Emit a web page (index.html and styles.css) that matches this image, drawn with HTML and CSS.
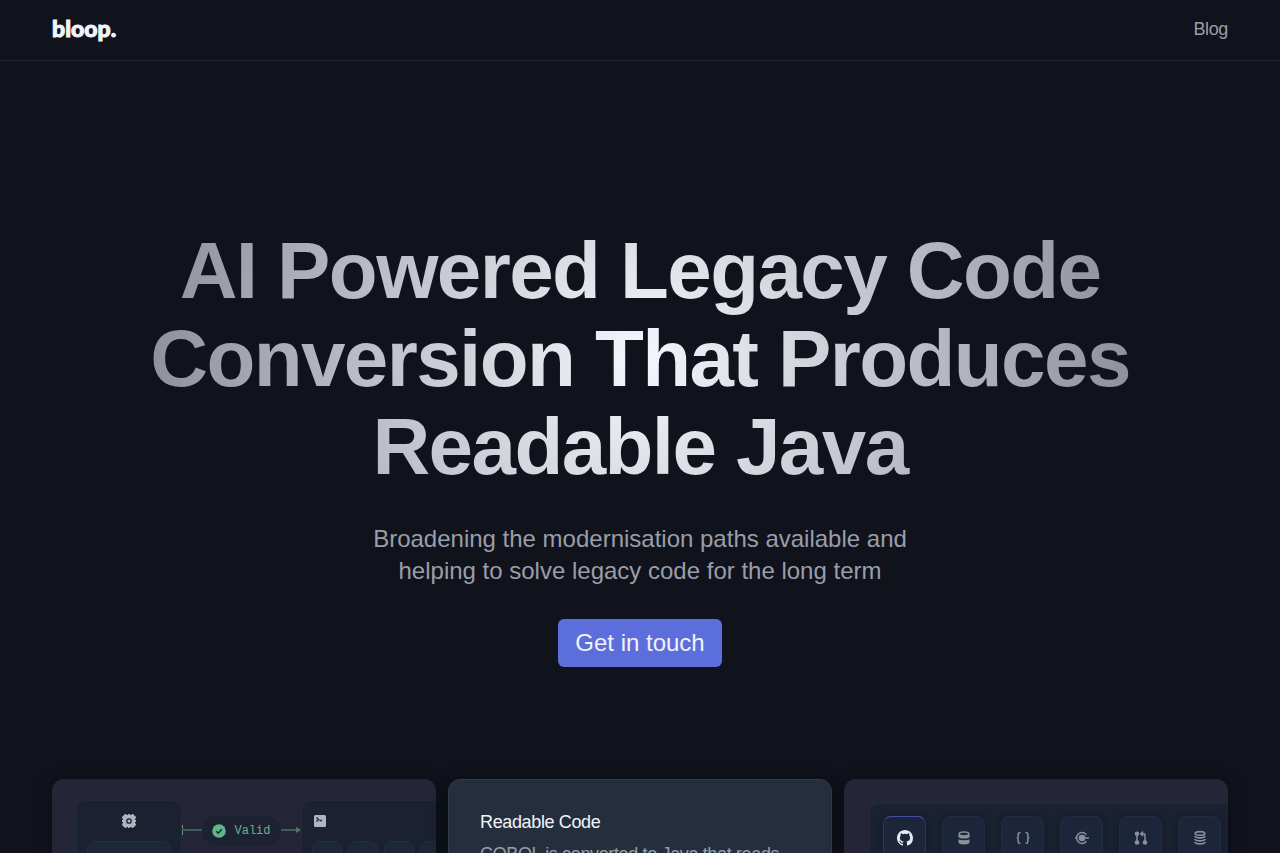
FILE: index.html
```
<!DOCTYPE html>
<html lang="en">
<head>
    <meta charset="UTF-8">
    <meta name="viewport" content="width=device-width, initial-scale=1.0">
    <title>bloop</title>
    <link rel="stylesheet" href="styles.css">
</head>
<body>
    <header class="navbar">
        <a href="#" class="logo">bloop.</a>
        <nav>
            <a href="#" class="nav-link">Blog</a>
        </nav>
    </header>
    <main>
        <section class="hero">
            <h1>AI Powered Legacy Code Conversion That Produces Readable Java</h1>
            <p>Broadening the modernisation paths available and helping to solve legacy code for the long term</p>
            <button type="button" class="cta">Get in touch</button>
        </section>
        <section class="cards">
            <article class="card card-art validate">
                <div class="panel source">
                    <svg class="icon" viewBox="0 0 16 16" width="16" height="16" fill="currentColor">
                        <path d="M4.500 1v14M8 1v14M11.500 1v14M1 4.500h14M1 8h14M1 11.500h14" stroke="currentColor" stroke-width="1.800"/>
                        <rect x="2" y="2" width="12" height="12" rx="1.500"/>
                        <circle cx="8" cy="8" r="2.200" stroke="#1b2131" stroke-width="1.300"/>
                    </svg>
                    <div class="slot"></div>
                </div>
                <svg class="connector" viewBox="0 0 20 16" width="20" height="16">
                    <path d="M0 3v10" stroke="#5b967b" stroke-width="2"/>
                    <path d="M0 8h20" stroke="currentColor" stroke-width="2"/>
                </svg>
                <div class="status">
                    <svg viewBox="0 0 14 14" width="14" height="14">
                        <circle cx="7" cy="7" r="6.800" fill="#62b585"/>
                        <path d="M4.200 7.200l2 2 3.600-4" fill="none" stroke="#1c2535" stroke-width="1.400"/>
                    </svg>
                    <span>Valid</span>
                </div>
                <svg class="connector" viewBox="0 0 20 16" width="20" height="16">
                    <path d="M0 8h16" stroke="currentColor" stroke-width="2"/>
                    <path d="M15 5l5 3-5 3z" fill="#4a7a69"/>
                </svg>
                <div class="panel target">
                    <svg class="icon" viewBox="0 0 16 16" width="16" height="16">
                        <rect x="2" y="2" width="12" height="12" rx="1.500" fill="currentColor"/>
                        <path d="M4.500 4.500l2 2-2 2M7.500 7.500H10" fill="none" stroke="#1b2332" stroke-width="1.300"/>
                    </svg>
                    <div class="slots">
                        <div class="slot"></div>
                        <div class="slot"></div>
                        <div class="slot"></div>
                        <div class="slot"></div>
                    </div>
                </div>
            </article>
            <article class="card card-text">
                <h2>Readable Code</h2>
                <p>COBOL is converted to Java that reads</p>
            </article>
            <article class="card card-art sources">
                <div class="tiles">
                    <div class="tile active">
                        <svg viewBox="0 0 16 16" width="16" height="16" fill="currentColor">
                            <path d="M8 0C3.580 0 0 3.580 0 8c0 3.540 2.290 6.530 5.470 7.590.4.070.550-.170.550-.380 0-.190-.010-.820-.010-1.490-2.010.370-2.530-.490-2.690-.940-.090-.230-.480-.940-.820-1.130-.280-.150-.680-.520-.010-.530.630-.010 1.080.580 1.230.820.720 1.210 1.870.870 2.330.660.070-.520.280-.870.510-1.070-1.780-.2-3.640-.890-3.640-3.950 0-.870.310-1.590.820-2.150-.080-.2-.360-1.020.080-2.120 0 0 .670-.210 2.200.820a7.600 7.600 0 0 1 4 0c1.530-1.040 2.200-.820 2.200-.820.440 1.100.160 1.920.080 2.120.510.560.820 1.270.820 2.150 0 3.070-1.870 3.750-3.650 3.950.290.250.540.730.540 1.480 0 1.070-.010 1.930-.010 2.200 0 .210.150.460.550.380A8 8 0 0 0 16 8c0-4.420-3.580-8-8-8z"/>
                        </svg>
                    </div>
                    <div class="tile">
                        <svg viewBox="0 0 16 16" width="16" height="16">
                            <path d="M2.500 4.500v2.200q0 1.800 5.500 1.800t5.500-1.800V4.500zM2.500 9.200v2.700q0 2.500 5.500 2.500t5.500-2.500V9.200Q12 10.300 8 10.300T2.500 9.200z" fill="currentColor"/>
                            <ellipse cx="8" cy="4" rx="4.800" ry="1.900" fill="#1c2539" stroke="currentColor" stroke-width="1.500"/>
                        </svg>
                    </div>
                    <div class="tile">
                        <svg viewBox="0 0 16 16" width="16" height="16" fill="none" stroke="currentColor" stroke-width="1.500">
                            <path d="M5.500 2.700h-1Q3.200 2.700 3.200 4v2.500Q3.200 8 1.800 8q1.400 0 1.400 1.500V12q0 1.300 1.300 1.300h1M10.500 2.700h1q1.300 0 1.300 1.300v2.500Q12.800 8 14.200 8q-1.400 0-1.400 1.500V12q0 1.300-1.300 1.300h-1"/>
                        </svg>
                    </div>
                    <div class="tile">
                        <svg viewBox="0 0 16 16" width="16" height="16" fill="none" stroke="currentColor" stroke-width="1.500">
                            <circle cx="8" cy="8" r="3.300" fill="currentColor" stroke="none"/>
                            <path d="M1 8h2m8 0h4M12.300 4.700A5.400 5.400 0 1 0 12.300 11.300"/>
                        </svg>
                    </div>
                    <div class="tile">
                        <svg viewBox="0 0 16 16" width="16" height="16" fill="none" stroke="currentColor" stroke-width="1.500">
                            <g fill="currentColor" stroke="none">
                                <circle cx="4" cy="3.700" r="2.300"/>
                                <circle cx="4" cy="12.500" r="2.300"/>
                                <circle cx="12" cy="12.500" r="2.300"/>
                            </g>
                            <path d="M4 4v8M12 12V5q0-1.300-1.300-1.300H8M10 1.500L7.800 3.700 10 5.900"/>
                        </svg>
                    </div>
                    <div class="tile">
                        <svg viewBox="0 0 16 16" width="16" height="16" fill="none" stroke="currentColor" stroke-width="1.600">
                            <ellipse cx="8" cy="3.400" rx="4.800" ry="1.800"/>
                            <path d="M2.700 6Q3.500 7.900 8 7.900T13.300 6M2.700 9q.8 1.900 5.300 1.900T13.300 9M2.700 12q.8 1.900 5.300 1.900t5.300-1.900"/>
                        </svg>
                    </div>
                </div>
            </article>
        </section>
    </main>
</body>
</html>
```
FILE: styles.css
```
* {
    box-sizing: border-box;
}
body, html {
    margin: 0;
    padding: 0;
    background-color: #10131c;
    color: #f1f3f9;
    font-family: "Liberation Sans", Arial, sans-serif;
    font-size: 18px;
}
h1, h2, p {
    margin: 0;
}
a {
    color: inherit;
    text-decoration: none;
}
.navbar {
    display: flex;
    align-items: flex-start;
    justify-content: space-between;
    padding: 15px 52px 17px;
    border-bottom: 1px solid #222b38;
}
.logo {
    font-family: Lato, sans-serif;
    font-size: 23px;
    font-weight: 900;
    line-height: 26px;
    -webkit-text-stroke: 1px currentColor;
}
.nav-link {
    display: block;
    color: #9a9ea8;
    line-height: 28px;
    letter-spacing: -0.02em;
}
.hero {
    display: flex;
    flex-direction: column;
    align-items: center;
    gap: 32px;
    padding: 166px 52px 112px;
    text-align: center;
}
.hero h1 {
    max-width: 1000px;
    font-size: 80px;
    line-height: 88px;
    letter-spacing: -0.02em;
    color: transparent;
    background: radial-gradient(circle at center, #f4f7fd 0%, #898c96 100%);
    background-clip: text;
    -webkit-background-clip: text;
}
.hero p {
    max-width: 576px;
    color: #9a9ea8;
    font-size: 24px;
    line-height: 32px;
}
.cta {
    padding: 8px 17px;
    border: none;
    border-radius: 6px;
    background-color: #5c6edb;
    color: #f1f3f9;
    font-family: inherit;
    font-size: 24px;
    line-height: 32px;
    cursor: pointer;
}
.cards {
    display: grid;
    grid-template-columns: repeat(3, 1fr);
    gap: 12px;
    padding: 0 52px 64px;
}
.card {
    min-height: 320px;
    min-width: 0;
    border-radius: 12px;
    box-shadow: 0 4px 16px rgba(5, 7, 14, 0.5);
    overflow: hidden;
}
.card-text {
    padding: 28px 31px;
    border: 1px solid #303a49;
    background-color: #252e3d;
}
.card-text h2 {
    font-size: 18px;
    font-weight: normal;
    line-height: 28px;
    letter-spacing: -0.02em;
}
.card-text p {
    margin-top: 4px;
    color: #9a9ea8;
    line-height: 28px;
    letter-spacing: -0.02em;
}
.card-art {
    background-color: #242637;
}
.validate {
    display: flex;
    align-items: flex-start;
    padding: 21px 0 0 24px;
}
.panel {
    flex: none;
    height: 240px;
    padding: 12px 10px;
    border: 1px solid #202b3b;
    border-radius: 10px;
    background-color: #1b2131;
    color: #b0b4c1;
}
.icon {
    display: block;
}
.source {
    width: 106px;
}
.source .icon {
    margin: 0 auto;
}
.target {
    flex: 1;
    min-width: 0;
    border-right: none;
    border-radius: 10px 0 0 0;
    overflow: hidden;
}
.slot {
    height: 100px;
    margin-top: 12px;
    border: 1px solid #222e40;
    border-radius: 8px;
    background-color: #1c2738;
}
.slots {
    display: flex;
    gap: 6px;
}
.slots .slot {
    flex: none;
    width: 30px;
}
.connector {
    flex: none;
    margin-top: 22px;
    color: #3c5d58;
}
.status {
    display: flex;
    flex: none;
    align-items: center;
    justify-content: center;
    gap: 8px;
    width: 79px;
    height: 30px;
    margin-top: 16px;
    border-radius: 15px;
    background-color: #1c2232;
    color: #6fae8e;
    font-family: "Liberation Mono", monospace;
    font-size: 12px;
}
.sources {
    padding: 24px 0 0 25px;
}
.tiles {
    display: flex;
    gap: 16px;
    height: 240px;
    padding: 12px 0 0 13px;
    border: 1px solid #202c3d;
    border-right: none;
    border-radius: 10px 0 0 0;
    background-color: #1a2130;
    overflow: hidden;
}
.tile {
    display: flex;
    flex: none;
    align-items: center;
    justify-content: center;
    width: 43px;
    height: 43px;
    border: 1px solid #222c3f;
    border-radius: 8px;
    background: linear-gradient(#1d253a, #1b273b);
    box-shadow: 0 0 6px rgba(10, 14, 26, 0.3);
    color: #8b909d;
}
.tile.active {
    border-color: #2b3660;
    border-top-color: #454f9f;
    color: #e8eaf3;
}
```
